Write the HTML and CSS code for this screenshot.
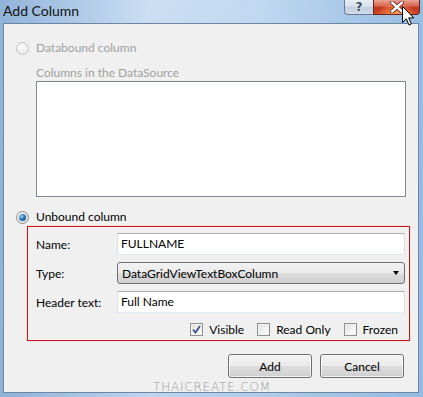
FILE: index.html
```html
<!DOCTYPE html>
<html>
<head>
<meta charset="utf-8">
<link rel="stylesheet" href="styles.css">
</head>
<body>
<div class="window">
  <div class="titlebar">
    <span class="title">Add Column</span>
    <div class="caption-btns">
      <div class="cap help">?</div>
      <div class="cap close">
        <svg width="16" height="12" viewBox="0 0 16 12"><path d="M3 1.5 L13 10.5 M13 1.5 L3 10.5" stroke="#5a1a10" stroke-width="4" stroke-linecap="round"/><path d="M3 1.5 L13 10.5 M13 1.5 L3 10.5" stroke="#fff" stroke-width="2.4" stroke-linecap="round"/></svg>
      </div>
    </div>
  </div>
  <div class="client">
    <div class="radio-row disabled"><span class="radio"></span><span>Databound column</span></div>
    <div class="sub-label">Columns in the DataSource</div>
    <div class="listbox"></div>
    <div class="radio-row"><span class="radio checked"></span><span>Unbound column</span></div>
    <div class="group">
      <div class="field"><span class="lbl">Name:</span><div class="textbox">FULLNAME</div></div>
      <div class="field"><span class="lbl">Type:</span><div class="combo"><span>DataGridViewTextBoxColumn</span><span class="arrow"></span></div></div>
      <div class="field"><span class="lbl">Header text:</span><div class="textbox">Full Name</div></div>
      <div class="checks">
        <div class="check"><span class="box checked"><svg width="9" height="9" viewBox="0 0 9 9"><path d="M1 4.5 L3.5 7.5 L8 1" stroke="#3d4f8a" stroke-width="1.8" fill="none"/></svg></span><span>Visible</span></div>
        <div class="check"><span class="box"></span><span>Read Only</span></div>
        <div class="check"><span class="box"></span><span>Frozen</span></div>
      </div>
    </div>
    <div class="buttons">
      <div class="btn">Add</div>
      <div class="btn">Cancel</div>
    </div>
  </div>
  <div class="watermark">THAICREATE.COM</div>
  <svg class="cursor" width="13" height="20" viewBox="0 0 13 20"><path d="M0.5 0.5 L0.5 16.5 L4.3 12.8 L7 19 L9.3 18 L6.7 11.9 L11.8 11.9 Z" fill="#fff" stroke="#000" stroke-width="1"/></svg>
</div>
</body>
</html>
```
FILE: styles.css
```css
* { box-sizing: border-box; }
html, body { margin: 0; padding: 0; }
body {
  width: 423px;
  height: 397px;
  overflow: hidden;
  font-family: Lato, "Open Sans", sans-serif;
  font-size: 12px;
  color: #000;
}
.window {
  position: relative;
  width: 423px;
  height: 397px;
  display: flex;
  flex-direction: column;
  background:
    linear-gradient(to right, rgba(140,175,215,0.9) 0%, rgba(205,225,245,0.6) 35%, rgba(190,215,240,0.5) 60%, rgba(145,185,225,0.9) 100%),
    linear-gradient(to bottom, #c5dbf1 0%, #a4c2e2 100%);
}
.titlebar {
  height: 23px;
  display: flex;
  align-items: flex-start;
  padding-left: 3px;
}
.title {
  font-size: 14px;
  line-height: 21px;
  color: #111;
}
.caption-btns {
  margin-left: auto;
  margin-right: 3px;
  display: flex;
  height: 15px;
}
.cap {
  height: 15px;
  border: 1px solid #6a7b93;
  border-top: none;
  display: flex;
  align-items: center;
  justify-content: center;
}
.help {
  width: 29px;
  border-radius: 0 0 0 4px;
  border-right: none;
  background: linear-gradient(to bottom, #e8eef6 0%, #d4dde9 50%, #c3cfdf 51%, #d0dcea 100%);
  font-family: "DejaVu Sans", sans-serif;
  font-weight: bold;
  font-size: 12px;
  color: #3e4a5a;
  text-shadow: 0 0 2px #fff;
  line-height: 1;
}
.close {
  width: 47px;
  border-color: #6e2418;
  border-radius: 0 0 4px 0;
  background:
    radial-gradient(ellipse at 50% 100%, rgba(255,170,90,0.9) 0%, rgba(255,120,60,0) 60%),
    linear-gradient(to bottom, #e9a496 0%, #d6604a 45%, #c2331b 55%, #d04a2a 100%);
}
.client {
  flex: 1;
  margin: 0 4px 4px 3px;
  border: 1px solid #6f86a2;
  background: #f0f0f0;
  display: flex;
  flex-direction: column;
}
.radio-row {
  display: flex;
  align-items: center;
  height: 16px;
  margin-left: 12px;
  margin-top: 16px;
  gap: 7px;
  line-height: 16px;
}
.radio-row.disabled { color: #a0a0a0; }
.radio {
  width: 13px;
  height: 13px;
  border-radius: 50%;
  border: 1px solid #8e8f8f;
  background: radial-gradient(circle at 40% 40%, #fcfcfc 0%, #e4e4e4 60%, #d2d2d2 100%);
  display: flex;
  align-items: center;
  justify-content: center;
}
.disabled .radio {
  border-color: #c4c4c4;
  background: radial-gradient(circle at 40% 40%, #fafafa 0%, #ececec 70%, #e2e2e2 100%);
}
.radio.checked::after {
  content: "";
  width: 7px;
  height: 7px;
  border-radius: 50%;
  background: radial-gradient(circle at 35% 35%, #a9d5f4 0%, #2a78b8 45%, #0f3d6a 100%);
}
.sub-label {
  margin-left: 32px;
  margin-top: 9px;
  height: 15px;
  line-height: 15px;
  color: #a0a0a0;
}
.listbox {
  margin-left: 32px;
  margin-top: 1px;
  width: 370px;
  height: 116px;
  border: 1px solid #828790;
  background: #fff;
}
.radio-row + .group { margin-top: 1px; }
.listbox + .radio-row { margin-top: 12px; }
.group {
  margin-left: 23px;
  width: 383px;
  border: 1px solid #c4161c;
  box-shadow: 0 0 1px rgba(200,20,20,0.4);
  padding: 6px 4px 4px 8px;
  display: flex;
  flex-direction: column;
  gap: 7px;
}
.field {
  display: flex;
  align-items: center;
  height: 22px;
}
.lbl {
  width: 81px;
  flex: none;
}
.textbox {
  flex: 1;
  height: 22px;
  background: #fff;
  border: 1px solid #dbdfe6;
  border-top-color: #abadb3;
  border-bottom-color: #e3e9ef;
  padding-left: 3px;
  line-height: 20px;
}
.combo {
  flex: 1;
  height: 22px;
  border: 1px solid #707070;
  border-radius: 3px;
  background: linear-gradient(to bottom, #f2f2f2 0%, #ebebeb 50%, #dddddd 51%, #cfcfcf 100%);
  display: flex;
  align-items: center;
  padding: 0 5px 0 4px;
}
.arrow {
  margin-left: auto;
  width: 0;
  height: 0;
  border-left: 3.5px solid transparent;
  border-right: 3.5px solid transparent;
  border-top: 4px solid #000;
}
.checks {
  margin-top: 3px;
  display: flex;
  justify-content: flex-end;
  gap: 13px;
  padding-right: 7px;
  height: 13px;
  align-items: center;
}
.check {
  display: flex;
  align-items: center;
  gap: 6px;
  line-height: 13px;
}
.box {
  width: 13px;
  height: 13px;
  border: 1px solid #8e8f8f;
  background: linear-gradient(135deg, #dcdcdc 0%, #f4f4f4 60%, #ffffff 100%);
  box-shadow: inset 0 0 0 1px #f4f4f4;
  display: flex;
  align-items: center;
  justify-content: center;
}
.buttons {
  display: flex;
  justify-content: flex-end;
  gap: 8px;
  margin-top: 13px;
  padding-right: 14px;
}
.btn {
  width: 84px;
  height: 24px;
  border: 1px solid #707070;
  border-radius: 3px;
  background: linear-gradient(to bottom, #f2f2f2 0%, #ebebeb 50%, #dddddd 51%, #cfcfcf 100%);
  box-shadow: inset 0 0 0 1px rgba(255,255,255,0.7);
  display: flex;
  align-items: center;
  justify-content: center;
}
.watermark {
  position: absolute;
  left: 153px;
  top: 380px;
  font-family: "DejaVu Sans", sans-serif;
  font-weight: 200;
  font-size: 12px;
  color: #9a9a9a;
  letter-spacing: 0.8px;
}
.cursor {
  position: absolute;
  left: 402px;
  top: 6px;
}
```
